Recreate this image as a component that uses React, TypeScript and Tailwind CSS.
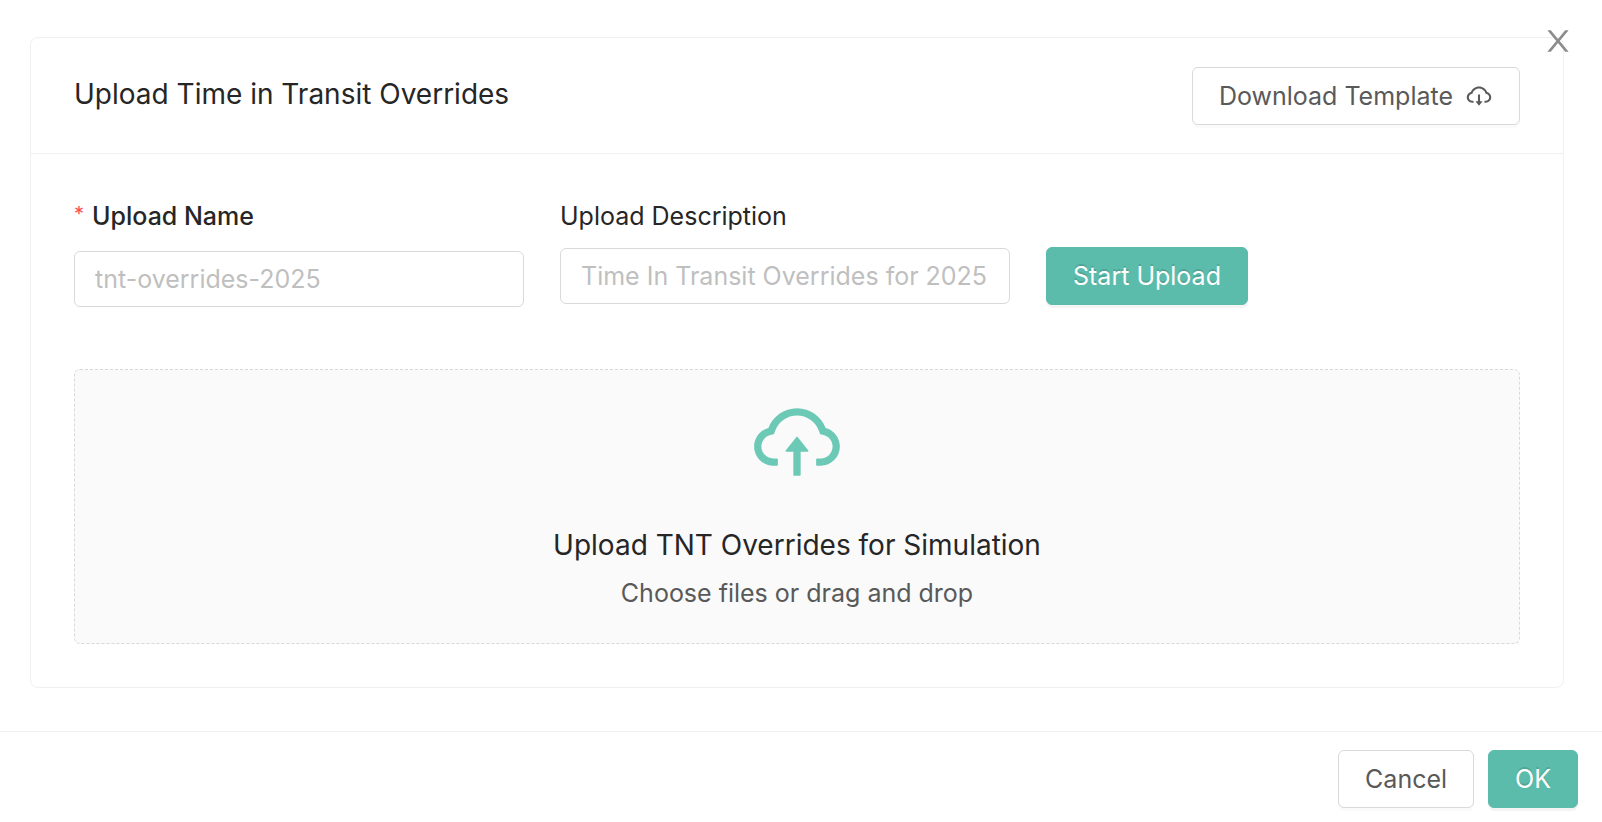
import { useState } from 'react'
import { AiOutlineCloudDownload, AiOutlineCloudUpload } from 'react-icons/ai'

const BUTTON = 'h-[58px] rounded-md border px-[26px] text-[25px] leading-8 whitespace-nowrap cursor-pointer'
const BUTTON_DEFAULT = 'border-[#d9d9d9] bg-white text-[#595959] shadow-[0_3px_0_rgba(0,0,0,0.02)]'
const BUTTON_PRIMARY =
  'border-[#5bbcab] bg-[#5bbcab] text-white shadow-[0_3px_0_rgba(0,0,0,0.045)] [text-shadow:0_-2px_0_rgba(0,0,0,0.12)]'
const INPUT =
  'h-14 w-[450px] rounded-md border border-[#d9d9d9] bg-white px-5 text-[25px] text-[#262626] placeholder:text-[#bfbfbf] focus:outline-none focus:border-[#5bbcab]'

function CloseIcon() {
  return (
    <svg viewBox="0 0 1024 1024" className="size-[34px]" fill="currentColor" aria-hidden="true">
      <path d="M563.8 512l262.5-312.9c4.4-5.2.7-13.1-6.1-13.1h-79.8c-4.7 0-9.2 2.1-12.3 5.7L511.6 449.8 295.1 191.7c-3-3.6-7.5-5.7-12.3-5.7H203c-6.8 0-10.5 7.9-6.1 13.1L459.4 512 196.9 824.9A7.95 7.95 0 0 0 203 838h79.8c4.7 0 9.2-2.1 12.3-5.7l216.5-258.1 216.5 258.1c3 3.6 7.5 5.7 12.3 5.7h79.8c6.8 0 10.5-7.9 6.1-13.1L563.8 512z" />
    </svg>
  )
}

export default function App() {
  const [name, setName] = useState('')
  const [description, setDescription] = useState('')

  return (
    <div className="relative bg-white font-['Inter',sans-serif] text-[#262626]">
      <button type="button" aria-label="Close" className="absolute top-6 right-[27px] text-[#8c8c8c] cursor-pointer">
        <CloseIcon />
      </button>

      <main className="pt-[37px] pr-[38px] pb-[43px] pl-[30px]">
        <section className="rounded-lg border border-[#f0f0f0]">
          <header className="flex items-start justify-between border-b border-[#f0f0f0] px-[43px] pt-[29px] pb-7">
            <h1 className="text-[28px] leading-[55px]">Upload Time in Transit Overrides</h1>
            <button type="button" className={`${BUTTON} ${BUTTON_DEFAULT} flex items-center gap-3`}>
              Download Template
              <AiOutlineCloudDownload size={28} />
            </button>
          </header>

          <div className="px-[43px] pt-[42px] pb-[43px]">
            {/* Upload details */}
            <form className="flex items-start gap-9" onSubmit={(e) => e.preventDefault()}>
              <div className="flex flex-col gap-[15px]">
                <label htmlFor="upload-name" className="flex items-start gap-2 text-[25px] leading-10 font-medium">
                  <span className="text-xl leading-9 font-normal text-[#ff4d4f]">*</span>
                  Upload Name
                </label>
                <input
                  id="upload-name"
                  type="text"
                  value={name}
                  onChange={(e) => setName(e.target.value)}
                  placeholder="tnt-overrides-2025"
                  className={INPUT}
                />
              </div>
              <div className="flex flex-col gap-3">
                <label htmlFor="upload-description" className="text-[25px] leading-10">
                  Upload Description
                </label>
                <input
                  id="upload-description"
                  type="text"
                  value={description}
                  onChange={(e) => setDescription(e.target.value)}
                  placeholder="Time In Transit Overrides for 2025"
                  className={INPUT}
                />
              </div>
              <button type="submit" className={`${BUTTON} ${BUTTON_PRIMARY} mt-[51px]`}>
                Start Upload
              </button>
            </form>

            {/* Drop area */}
            <button
              type="button"
              className="mt-[62px] flex h-[275px] w-full cursor-pointer flex-col items-center rounded-md border border-dashed border-[#d9d9d9] bg-[#fafafa] pt-[23px]"
            >
              <AiOutlineCloudUpload size={98} className="text-[#6bc9b5]" />
              <span className="mt-[34px] text-[28px] leading-10">Upload TNT Overrides for Simulation</span>
              <span className="mt-2 text-[25px] leading-10 text-[#595959]">Choose files or drag and drop</span>
            </button>
          </div>
        </section>
      </main>

      <footer className="flex justify-end gap-[14px] border-t border-[#f0f0f0] pt-[18px] pr-6 pb-[14px]">
        <button type="button" className={`${BUTTON} ${BUTTON_DEFAULT}`}>
          Cancel
        </button>
        <button type="button" className={`${BUTTON} ${BUTTON_PRIMARY}`}>
          OK
        </button>
      </footer>
    </div>
  )
}
